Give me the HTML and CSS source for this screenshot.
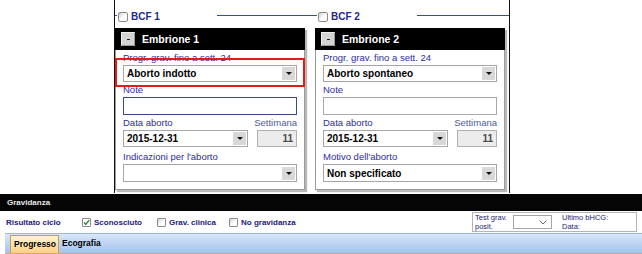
FILE: index.html
```html
<!DOCTYPE html>
<html>
<head>
<meta charset="utf-8">
<title>Gravidanza</title>
<link rel="stylesheet" href="styles.css">
</head>
<body>
<div class="top">
  <div class="frame">
    <div class="legends">
      <div class="lead lead1"></div>
      <div class="legend"><span class="cb"></span><span class="bcf">BCF 1</span></div>
      <div class="rule rule1"></div>
      <div class="lead lead2"></div>
      <div class="legend"><span class="cb"></span><span class="bcf">BCF 2</span></div>
      <div class="rule rule2"></div>
    </div>
    <div class="cards">
      <div class="card">
        <div class="card-head"><span class="minus"><i></i></span><span class="title">Embrione 1</span></div>
        <div class="card-body">
          <div class="lbl">Progr. grav. fino a sett. 24</div>
          <div class="sel"><span class="val">Aborto indotto</span><span class="btn"><i></i></span></div>
          <div class="lbl">Note</div>
          <div class="inp focus"></div>
          <div class="lbl split"><span>Data aborto</span><span class="sett">Settimana</span></div>
          <div class="pair">
            <div class="sel date"><span class="val">2015-12-31</span><span class="btn"><i></i></span></div>
            <div class="num">11</div>
          </div>
          <div class="lbl last">Indicazioni per l'aborto</div>
          <div class="sel tall"><span class="val"></span><span class="btn"><i></i></span></div>
        </div>
      </div>
      <div class="card">
        <div class="card-head"><span class="minus"><i></i></span><span class="title">Embrione 2</span></div>
        <div class="card-body">
          <div class="lbl">Progr. grav. fino a sett. 24</div>
          <div class="sel"><span class="val">Aborto spontaneo</span><span class="btn"><i></i></span></div>
          <div class="lbl">Note</div>
          <div class="inp"></div>
          <div class="lbl split"><span>Data aborto</span><span class="sett">Settimana</span></div>
          <div class="pair">
            <div class="sel date"><span class="val">2015-12-31</span><span class="btn"><i></i></span></div>
            <div class="num">11</div>
          </div>
          <div class="lbl last">Motivo dell'aborto</div>
          <div class="sel tall"><span class="val">Non specificato</span><span class="btn"><i></i></span></div>
        </div>
      </div>
    </div>
    <div class="highlight"></div>
  </div>
</div>
<div class="section-bar">Gravidanza</div>
<div class="result-row">
  <span class="rc-label">Risultato ciclo</span>
  <span class="chk-item w1"><span class="cb-s checked"><svg viewBox="0 0 9 9" width="9" height="9"><path d="M1.5 4.5 L3.5 7 L8 1.5" fill="none" stroke="#1e8a2e" stroke-width="1.8"/></svg></span>Sconosciuto</span>
  <span class="chk-item w2"><span class="cb-s"></span>Grav. clinica</span>
  <span class="chk-item"><span class="cb-s"></span>No gravidanza</span>
  <div class="test-box">
    <span class="tg">Test grav.<br>posit.</span>
    <span class="mini-sel"><svg viewBox="0 0 8 5" width="8" height="5"><path d="M0.5 0.5 L4 4 L7.5 0.5" fill="none" stroke="#6a6a6a" stroke-width="1"/></svg></span>
    <span class="tg">Ultimo bHCG:<br>Data:</span>
  </div>
</div>
<div class="tabbar">
  <span class="tab active">Progresso</span>
  <span class="tab">Ecografia</span>
</div>
</body>
</html>
```
FILE: styles.css
```css
* { box-sizing: border-box; }
html, body { margin: 0; padding: 0; background: #fff; }
body { font-family: "Liberation Sans", Arial, sans-serif; width: 642px; height: 254px; overflow: hidden; }

.top { height: 194px; }
.frame {
  position: relative;
  margin-left: 114px;
  width: 396px;
  height: 193px;
  border-left: 1px solid #111;
  border-right: 1px solid #111;
}
.legends { display: flex; height: 28px; }
.lead, .rule { height: 1px; margin-top: 15px; background: #3a4aa0; }
.lead1 { width: 2px; }
.lead2 { width: 4px; }
.rule1 { width: 96px; }
.rule2 { flex: 1; }
.legend { width: 100px; height: 10px; margin-top: 12px; display: flex; align-items: center; gap: 3px; }
.cb {
  width: 10px; height: 10px; margin-left: 1px;
  border: 1px solid #8c8c8c; border-radius: 2px;
  background: linear-gradient(135deg, #d0d0d0, #ffffff 55%);
}
.bcf { font-weight: bold; font-size: 10px; color: #1f2a8c; line-height: 10px; }

.cards { display: flex; gap: 10px; }
.card {
  width: 190px; height: 162px;
  border: 1px solid #9c9c9c;
  box-shadow: 2px 2px 1px rgba(0,0,0,0.28);
  background: #fff;
}
.card-head {
  height: 22px; margin: -1px -1px 0;
  background: #000;
  display: flex; align-items: center;
  padding-left: 6px;
}
.minus {
  width: 14px; height: 14px;
  background: #d4d4d4;
  border: 1px solid #efefef; border-right-color: #9a9a9a; border-bottom-color: #9a9a9a;
  display: flex; align-items: center; justify-content: center;
}
.minus i { width: 3px; height: 1px; background: #222; }
.title { color: #fff; font-weight: bold; font-size: 10.5px; margin-left: 7px; }

.card-body { padding: 0 7px; }
.lbl { height: 15px; line-height: 15px; font-size: 9.5px; color: #2d2da0; white-space: nowrap; }
.lbl.last { height: 17px; line-height: 14px; padding-top: 3px; }
.split { display: flex; justify-content: space-between; }
.sett { color: #4c5c98; }

.sel {
  height: 17px;
  border: 1px solid #a6a6a6;
  background: #fff;
  display: flex; align-items: center; justify-content: space-between;
  padding: 0 1px 0 3px;
}
.sel.tall { height: 18px; }
.val { font-weight: bold; font-size: 10px; color: #000; }
.btn {
  width: 13px; height: 13px;
  background: #d8d8d8;
  display: flex; align-items: center; justify-content: center;
}
.btn i {
  width: 0; height: 0;
  border-left: 3px solid transparent; border-right: 3px solid transparent;
  border-top: 3px solid #111;
}
.inp { height: 18px; border: 1px solid #a8a8a8; background: #fff; }
.inp.focus { border-color: #3c4888; }
.pair { display: flex; justify-content: space-between; }
.date { width: 125px; }
.num {
  width: 40px; height: 17px;
  border: 1px solid #b0b0b0; background: #ececec;
  text-align: right; padding-right: 3px;
  font-weight: bold; font-size: 10px; line-height: 15px; color: #4a4a4a;
}

.highlight {
  position: absolute; left: 0; top: 58px;
  width: 190px; height: 29px;
  border: 2px solid #e21a1a;
}

.section-bar {
  height: 17px; background: #050505;
  color: #e8e8e8; font-weight: bold; font-size: 8px; line-height: 17px;
  padding-left: 7px;
}
.result-row {
  height: 22px; display: flex; align-items: center;
  padding-left: 6px; padding-right: 5px;
  font-size: 8px; font-weight: bold; color: #1c2080;
}
.rc-label { width: 76px; }
.chk-item { display: flex; align-items: center; gap: 3px; }
.w1 { width: 75px; }
.w2 { width: 72px; }
.cb-s {
  width: 9px; height: 9px;
  border: 1px solid #8c8c8c; border-radius: 1px;
  background: linear-gradient(135deg, #d4d4d4, #fff 55%);
  display: flex; align-items: center; justify-content: center;
}
.cb-s.checked { background: #fff; }
.cb-s svg { display: block; }
.test-box {
  margin-left: auto;
  width: 165px; height: 20px;
  border: 1px solid #b4b4b4;
  display: flex; align-items: center;
  padding-left: 2px;
}
.tg { font-size: 7.5px; font-weight: normal; line-height: 9px; color: #1c2470; }
.mini-sel {
  width: 39px; height: 14px; margin-left: 6px; margin-right: 10px;
  border: 1px solid #a4a4a4; background: #fff;
  display: flex; align-items: center; justify-content: flex-end; padding-right: 4px;
}

.tabbar {
  margin-left: 5px; height: 21px;
  background: linear-gradient(#d8e6f8, #a6c3ec);
  border-top: 1px solid #9cb8e0;
  border-bottom: 1px solid #e2a46a;
  display: flex; align-items: flex-end;
  padding-left: 5px;
}
.tab { font-size: 8.5px; font-weight: bold; color: #000; height: 18px; line-height: 17px; padding: 0 3px; }
.tab.active {
  width: 49px;
  background: linear-gradient(#fff4d6, #ffd084);
  border: 1px solid #c89a5a; border-bottom: none;
}
```
